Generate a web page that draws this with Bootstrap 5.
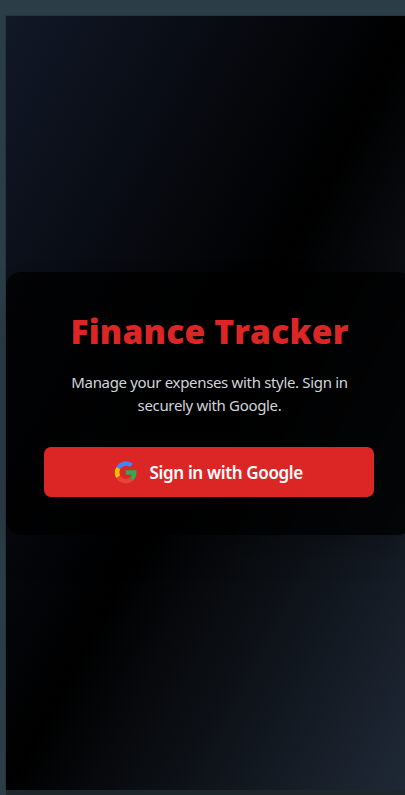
<!DOCTYPE html>
<html lang="en">
<head>
<meta charset="utf-8">
<meta name="viewport" content="width=device-width, initial-scale=1">
<title>Finance Tracker</title>
<link href="https://cdn.jsdelivr.net/npm/bootstrap@5.3.0/dist/css/bootstrap.min.css" rel="stylesheet">
<style>
body { background: #2b3d47; font-family: "Noto Sans", "Open Sans", sans-serif; height: 795px; padding: 15px 0 0 5px; }
.screen { width: 408px; height: 775px; border: solid #26343a; border-width: 1px 0 0 1px; background: linear-gradient(to bottom right, #111827, #000 50%, #1f2937); }
.floor { height: 5px; margin-left: 1px; background: #1c262b; }
.login { width: 407px; height: 263px; padding: 38px 38px 0; border-radius: 15px; background: rgba(0,0,0,.8); margin-top: 1px; box-shadow: 0 18px 36px -9px rgba(0,0,0,.25); }
.login h1 { font-family: "Open Sans", sans-serif; font-size: 33.5px; line-height: 42px; font-weight: 800; letter-spacing: .2px; color: #dc2626; margin-bottom: 19px; }
.login p { font-size: 15px; line-height: 23px; color: #d1d5db; margin-bottom: 30px; letter-spacing: -.33px; }
.btn-google { --bs-btn-color: #fff; --bs-btn-bg: #dc2626; --bs-btn-hover-color: #fff; --bs-btn-hover-bg: #b91c1c; width: 330px; height: 50px; border: 0; border-radius: 7px; font-size: 17px; font-weight: 600; letter-spacing: -.35px; padding: 0 3px 0 0; }
.btn-google svg { margin-right: 10.5px; }
.btn-google span { padding-top: 2px; }
</style>
</head>
<body class="overflow-hidden">
<main class="screen d-flex align-items-center">
  <section class="login text-center flex-shrink-0">
    <h1 class="text-nowrap">Finance Tracker</h1>
    <p class="text-nowrap">Manage your expenses with style. Sign in<br>securely with Google.</p>
    <button class="btn btn-google d-flex align-items-center justify-content-center" type="button">
      <svg class="flex-shrink-0" width="27" height="27" viewBox="0 0 48 48" aria-hidden="true">
        <path fill="#4285f4" d="M8.1 14A19.5 19.5 0 0 1 37.4 8.5L31.8 14.2A12 12 0 0 0 14.3 18.3Z"/>
        <path fill="#fbbc05" d="M8 14L14.4 18.3A12 12 0 0 0 14.3 29.3L8 34.2A19.5 19.5 0 0 1 8 14Z"/>
        <path fill="#ea4335" d="M8 34L14.3 29.3A12 12 0 0 0 31.4 33.5L37.5 38.7A19.5 19.5 0 0 1 8 34Z"/>
        <path fill="#34a853" d="M24.5 20H43.2C44.4 27 42.5 34 37.5 38.7L31.4 33.7C33.3 32.2 34.6 30.2 35 28H24.5Z"/>
      </svg>
      <span>Sign in with Google</span>
    </button>
  </section>
</main>
<div class="floor"></div>
<script src="https://cdn.jsdelivr.net/npm/bootstrap@5.3.0/dist/js/bootstrap.bundle.min.js"></script>
</body>
</html>
